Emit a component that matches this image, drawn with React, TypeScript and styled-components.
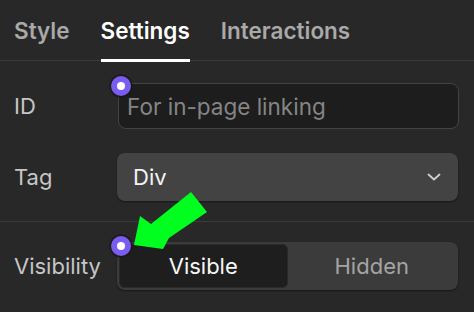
import styled, { createGlobalStyle } from 'styled-components'

const GlobalStyle = createGlobalStyle`
  html, body {
    margin: 0;
    padding: 0;
    background: #282828;
  }

  body {
    font-family: Inter, "Noto Sans", sans-serif;
  }
`

const tabs = ['Style', 'Settings', 'Interactions']

export default function App() {
  return (
    <>
      <GlobalStyle />
      <Panel>
        <TabBar>
          {tabs.map((tab) => (
            <Tab key={tab} $active={tab === 'Settings'}>
              {tab}
            </Tab>
          ))}
        </TabBar>

        <Section $top={22} $bottom={20}>
          <Row>
            <Label>ID</Label>
            <Control>
              <TextInput placeholder="For in-page linking" />
              <Dot $top={-7} />
            </Control>
          </Row>
          <Row>
            <Label>Tag</Label>
            <Control>
              <Select type="button">
                <span>Div</span>
                <svg width="14" height="8" viewBox="0 0 14 8" fill="none">
                  <path
                    d="M1.5 1.5 7 6.5l5.5-5"
                    stroke="#d0d0d0"
                    strokeWidth="1.8"
                    strokeLinecap="round"
                    strokeLinejoin="round"
                  />
                </svg>
              </Select>
            </Control>
          </Row>
        </Section>

        <Section $top={20} $bottom={19} $divider>
          <Row>
            <Label>Visibility</Label>
            <Control>
              <Segmented>
                <Segment $active>Visible</Segment>
                <Segment>Hidden</Segment>
              </Segmented>
              <Dot $top={-6} />
            </Control>
          </Row>
        </Section>

        <Annotation width="474" height="312" viewBox="0 0 474 312">
          <polygon
            points="134,245 140,216 151,224 191,192 207,212 169,238 163,249"
            fill="#00ff1e"
          />
        </Annotation>
      </Panel>
    </>
  )
}

const Panel = styled.div`
  position: relative;
  width: 474px;
  height: 312px;
  background: #282828;
  overflow: hidden;
`

const TabBar = styled.div`
  display: flex;
  gap: 31px;
  height: 61px;
  padding: 0 14px;
  border-bottom: 1px solid #3b3b3b;
  box-sizing: border-box;
`

const Tab = styled.div<{ $active?: boolean }>`
  display: flex;
  align-items: center;
  padding-top: 1px;
  margin-bottom: -2px;
  border-bottom: 3px solid ${(p) => (p.$active ? '#ffffff' : 'transparent')};
  color: ${(p) => (p.$active ? '#ffffff' : '#a9a9a9')};
  font-size: 22.5px;
  font-weight: 600;
`

const Section = styled.div<{ $top: number; $bottom: number; $divider?: boolean }>`
  display: flex;
  flex-direction: column;
  gap: 24px;
  padding: ${(p) => p.$top}px 16px ${(p) => p.$bottom}px 14px;
  border-top: ${(p) => (p.$divider ? '1px solid #3b3b3b' : 'none')};
`

const Row = styled.div`
  display: grid;
  grid-template-columns: 103px 1fr;
  align-items: center;
`

const Label = styled.div`
  color: #c6c6c6;
  font-size: 22px;
`

const Control = styled.div`
  position: relative;
`

const TextInput = styled.input`
  display: block;
  width: 100%;
  height: 46px;
  box-sizing: border-box;
  margin-left: 1px;
  padding: 0 8px;
  border: 1px solid #434343;
  border-radius: 8px;
  background: #1d1d1d;
  color: #f0f0f0;
  font: inherit;
  font-size: 22.5px;
  outline: none;

  &::placeholder {
    color: #858585;
  }
`

const Select = styled.button`
  display: flex;
  align-items: center;
  justify-content: space-between;
  width: 100%;
  height: 48px;
  padding: 0 17px 0 16px;
  border: none;
  border-radius: 8px;
  background: #434343;
  box-shadow: 0 1px 2px rgba(0, 0, 0, 0.45);
  color: #f4f4f4;
  font: inherit;
  font-size: 22px;
`

const Segmented = styled.div`
  display: grid;
  grid-template-columns: 1fr 1fr;
  height: 48px;
  padding: 2px;
  box-sizing: border-box;
  border-radius: 8px;
  background: #3b3b3b;
  box-shadow: 0 1px 2px rgba(0, 0, 0, 0.45);
`

const Segment = styled.div<{ $active?: boolean }>`
  display: flex;
  align-items: center;
  justify-content: center;
  border-radius: 6px;
  background: ${(p) => (p.$active ? '#1e1e1e' : 'transparent')};
  box-shadow: ${(p) => (p.$active ? 'inset 0 0 0 1px #2a2a2a' : 'none')};
  color: ${(p) => (p.$active ? '#f6f6f6' : '#a4a4a4')};
  font-size: 22px;
`

const Dot = styled.span<{ $top: number }>`
  position: absolute;
  top: ${(p) => p.$top}px;
  left: -6px;
  width: 20px;
  height: 20px;
  border-radius: 50%;
  background: #7b5cf0;
  box-shadow: 0 0 0 1.5px rgba(20, 20, 20, 0.7);

  &::after {
    content: '';
    position: absolute;
    top: 6px;
    left: 6px;
    width: 8px;
    height: 8px;
    border-radius: 50%;
    background: #ffffff;
  }
`

const Annotation = styled.svg`
  position: absolute;
  top: 0;
  left: 0;
  pointer-events: none;
`
